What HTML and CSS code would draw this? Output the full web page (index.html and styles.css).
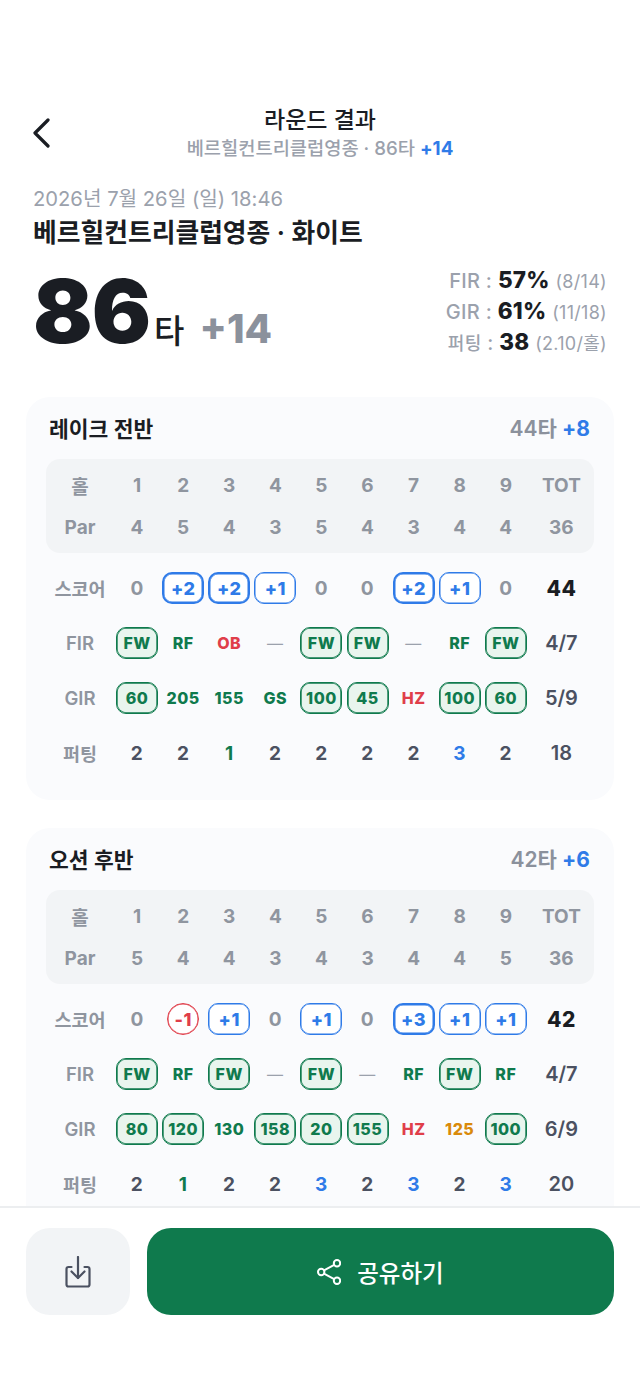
FILE: index.html
```html
<!DOCTYPE html>
<html lang="ko">
<head>
    <meta charset="UTF-8">
    <meta name="viewport" content="width=device-width, initial-scale=1.0">
    <title>라운드 결과</title>
    <link rel="stylesheet" href="styles.css">
</head>
<body>
    <div class="page">
        <div class="content">
            <div class="topbar">
                <svg class="back" width="18" height="30" viewBox="0 0 18 30" fill="none"><path d="M16 2 L3 15 L16 28" stroke="#1a1d23" stroke-width="3.200" stroke-linecap="round" stroke-linejoin="round"/></svg>
                <div class="topbar-title">라운드 결과</div>
                <div class="topbar-sub">베르힐컨트리클럽영종 · 86타 <b class="blue">+14</b></div>
            </div>

            <div class="summary">
                <div class="date">2026년 7월 26일 (일) 18:46</div>
                <div class="course">베르힐컨트리클럽영종 · 화이트</div>
                <div class="result">
                    <div class="score-total"><span class="big">86</span><span class="ta">타</span><span class="over">+14</span></div>
                    <div class="stats">
                        <div>FIR : <b>57%</b> <small>(8/14)</small></div>
                        <div>GIR : <b>61%</b> <small>(11/18)</small></div>
                        <div><span class="stat-ko">퍼팅</span> : <b>38</b> <small>(2.10/홀)</small></div>
                    </div>
                </div>
            </div>

            <div class="card">
                <div class="card-head"><span class="card-title">레이크 전반</span><span class="card-score">44타 <b class="blue">+8</b></span></div>
                <div class="head-table">
                    <div class="row head"><span class="label">홀</span><span>1</span><span>2</span><span>3</span><span>4</span><span>5</span><span>6</span><span>7</span><span>8</span><span>9</span><span class="tot">TOT</span></div>
                    <div class="row head"><span class="label">Par</span><span>4</span><span>5</span><span>4</span><span>3</span><span>5</span><span>4</span><span>3</span><span>4</span><span>4</span><span class="tot">36</span></div>
                </div>
                <div class="row body">
                    <span class="label">스코어</span><span class="zero">0</span><span class="chip dbl">+2</span><span class="chip dbl">+2</span><span class="chip bog">+1</span><span class="zero">0</span><span class="zero">0</span><span class="chip dbl">+2</span><span class="chip bog">+1</span><span class="zero">0</span><span class="tot strong">44</span>
                </div>
                <div class="row body">
                    <span class="label">FIR</span><span class="chip hit">FW</span><span class="g">RF</span><span class="r">OB</span><span class="dash">—</span><span class="chip hit">FW</span><span class="chip hit">FW</span><span class="dash">—</span><span class="g">RF</span><span class="chip hit">FW</span><span class="tot frac">4/7</span>
                </div>
                <div class="row body">
                    <span class="label">GIR</span><span class="chip hit">60</span><span class="g">205</span><span class="g">155</span><span class="g">GS</span><span class="chip hit">100</span><span class="chip hit">45</span><span class="r">HZ</span><span class="chip hit">100</span><span class="chip hit">60</span><span class="tot frac">5/9</span>
                </div>
                <div class="row body putt">
                    <span class="label">퍼팅</span><span>2</span><span>2</span><span class="pg">1</span><span>2</span><span>2</span><span>2</span><span>2</span><span class="pb">3</span><span>2</span><span class="tot frac">18</span>
                </div>
            </div>

            <div class="card">
                <div class="card-head"><span class="card-title">오션 후반</span><span class="card-score">42타 <b class="blue">+6</b></span></div>
                <div class="head-table">
                    <div class="row head"><span class="label">홀</span><span>1</span><span>2</span><span>3</span><span>4</span><span>5</span><span>6</span><span>7</span><span>8</span><span>9</span><span class="tot">TOT</span></div>
                    <div class="row head"><span class="label">Par</span><span>5</span><span>4</span><span>4</span><span>3</span><span>4</span><span>3</span><span>4</span><span>4</span><span>5</span><span class="tot">36</span></div>
                </div>
                <div class="row body">
                    <span class="label">스코어</span><span class="zero">0</span><span class="chip birdie">-1</span><span class="chip bog">+1</span><span class="zero">0</span><span class="chip bog">+1</span><span class="zero">0</span><span class="chip dbl">+3</span><span class="chip bog">+1</span><span class="chip bog">+1</span><span class="tot strong">42</span>
                </div>
                <div class="row body">
                    <span class="label">FIR</span><span class="chip hit">FW</span><span class="g">RF</span><span class="chip hit">FW</span><span class="dash">—</span><span class="chip hit">FW</span><span class="dash">—</span><span class="g">RF</span><span class="chip hit">FW</span><span class="g">RF</span><span class="tot frac">4/7</span>
                </div>
                <div class="row body">
                    <span class="label">GIR</span><span class="chip hit">80</span><span class="chip hit">120</span><span class="g">130</span><span class="chip hit">158</span><span class="chip hit">20</span><span class="chip hit">155</span><span class="r">HZ</span><span class="o">125</span><span class="chip hit">100</span><span class="tot frac">6/9</span>
                </div>
                <div class="row body putt">
                    <span class="label">퍼팅</span><span>2</span><span class="pg">1</span><span>2</span><span>2</span><span class="pb">3</span><span>2</span><span class="pb">3</span><span>2</span><span class="pb">3</span><span class="tot frac">20</span>
                </div>
            </div>
        </div>

        <div class="footer">
            <button class="btn-save">
                <svg width="26" height="32" viewBox="0 0 26 32" fill="none" stroke="#4b5161" stroke-width="2.200" stroke-linecap="round" stroke-linejoin="round"><path d="M6.500 11 H3.500 Q1.500 11 1.500 13 V28.500 Q1.500 30.500 3.500 30.500 H22.500 Q24.500 30.500 24.500 28.500 V13 Q24.500 11 22.500 11 H19.500"/><path d="M13 1 V22"/><path d="M6.500 15.500 L13 22 L19.500 15.500"/></svg>
            </button>
            <button class="btn-share">
                <svg width="24" height="26" viewBox="0 0 24 26" fill="none" stroke="#fff" stroke-width="2"><circle cx="4.200" cy="13" r="3.200"/><circle cx="20" cy="4.300" r="3.200"/><circle cx="20" cy="21.700" r="3.200"/><path d="M7 11.400 L17.200 5.900 M7 14.600 L17.200 20.100"/></svg>
                <span>공유하기</span>
            </button>
        </div>
    </div>
</body>
</html>
```

FILE: styles.css
```css
* {
    box-sizing: border-box;
}
body {
    margin: 0;
    background: #fff;
    color: #1a1d23;
    font-family: Inter, "Noto Sans CJK KR", sans-serif;
}
.page {
    display: flex;
    flex-direction: column;
    height: 1387px;
    overflow: hidden;
}
.content {
    flex: 1;
    min-height: 0;
    overflow: hidden;
    padding: 105px 26px 0;
}
.blue {
    color: #2f7be8;
    font-weight: 700;
}

/* top bar */
.topbar {
    position: relative;
    text-align: center;
    height: 60px;
}
.back {
    position: absolute;
    left: 6px;
    top: 13px;
}
.topbar-title {
    font-size: 23px;
    font-weight: 500;
    line-height: 30px;
}
.topbar-sub {
    font-size: 18.700px;
    line-height: 28px;
    color: #9ba1ac;
    font-weight: 500;
}

/* summary */
.summary {
    padding: 21px 7px 0;
    height: 232px;
}
.date {
    font-size: 20.200px;
    line-height: 26px;
    color: #9ba1ac;
}
.course {
    font-size: 25.800px;
    font-weight: 600;
    line-height: 34px;
    margin-top: 4px;
}
.result {
    display: flex;
    justify-content: space-between;
    align-items: flex-start;
    margin-top: 11px;
    margin-right: -7px;
    padding-right: 7px;
}
.score-total {
    display: flex;
    align-items: baseline;
    line-height: 100px;
}
.big {
    font-size: 88px;
    font-weight: 900;
    letter-spacing: -1px;
}
.ta {
    font-size: 33px;
    font-weight: 500;
    margin-left: 4px;
}
.over {
    font-size: 40px;
    font-weight: 800;
    color: #8b919c;
    margin-left: 15px;
}
.stats {
    padding-top: 5px;
    text-align: right;
    font-size: 20px;
    font-weight: 500;
    letter-spacing: 0.300px;
    color: #9ba1ac;
}
.stats div {
    height: 31px;
    line-height: 31px;
}
.stats b {
    color: #1a1d23;
    font-size: 22.500px;
    font-weight: 800;
    line-height: 1;
}
.stats small {
    font-size: 18px;
    font-weight: 400;
    line-height: 1;
}
.stat-ko {
    font-size: 18px;
}

/* cards */
.card {
    background: #fafbfd;
    border-radius: 24px;
    padding: 19px 20px 31px;
    height: 403px;
    margin-bottom: 28px;
}
.card-head {
    display: flex;
    justify-content: space-between;
    align-items: center;
    height: 22px;
    padding: 0 4px 0 3px;
    margin-bottom: 21px;
}
.card-title {
    font-size: 21.500px;
    font-weight: 600;
}
.card-score {
    font-size: 21px;
    font-weight: 600;
    color: #8b919c;
}
.head-table {
    background: #f2f4f6;
    border-radius: 14px;
    padding: 5px 0;
    margin-bottom: 19px;
}
.row {
    display: grid;
    grid-template-columns: 68px repeat(9, 46.100px) 1fr;
    align-items: center;
    justify-items: center;
    text-align: center;
}
.head {
    height: 42px;
    font-size: 19px;
    font-weight: 700;
    color: #8f959f;
}
.tot {
    justify-self: center;
}
.body {
    height: 32px;
    margin-bottom: 23px;
    font-size: 16px;
    font-weight: 800;
    letter-spacing: 0.500px;
}
.body:last-child {
    margin-bottom: 0;
}
.body .label {
    color: #8f959f;
    font-size: 18.500px;
    font-weight: 600;
    letter-spacing: 0;
}
.chip {
    display: flex;
    align-items: center;
    justify-content: center;
    width: 42px;
    height: 32px;
    border-radius: 10px;
    font-size: 16px;
}
.zero {
    font-size: 19px;
    font-weight: 700;
    color: #8f959f;
}
.dbl {
    border: 2px solid #2f7be8;
    box-shadow: inset 0 0 0 0.500px #2f7be8;
    color: #2f7be8;
    background: #fff;
    font-size: 18px;
}
.bog {
    border: 1px solid #2f7be8;
    box-shadow: inset 0 0 0 0.500px #2f7be8;
    color: #2f7be8;
    background: #fff;
    font-size: 18px;
}
.birdie {
    width: 32px;
    border: 1px solid #e03e4a;
    border-radius: 50%;
    box-shadow: inset 0 0 0 0.500px #e03e4a;
    color: #e03e4a;
    background: #fff;
    font-size: 18px;
}
.hit {
    border: 1px solid #0f7a4d;
    box-shadow: inset 0 0 0 0.700px #0f7a4d;
    background: #e9f5ee;
    color: #0f7a4d;
}
.g {
    color: #0f7a4d;
}
.r {
    color: #e03e4a;
}
.o {
    color: #d98a0b;
}
.dash {
    color: #9ba1ac;
    font-weight: 400;
    font-size: 16px;
}
.strong {
    font-size: 21px;
    color: #1a1d23;
}
.frac {
    font-size: 20px;
    font-weight: 600;
    letter-spacing: 0;
    color: #4b5161;
}
.putt {
    font-size: 19px;
    font-weight: 700;
    color: #4b5161;
}
.pg {
    color: #0f7a4d;
}
.pb {
    color: #2f7be8;
}

/* footer */
.footer {
    flex: none;
    height: 181px;
    display: flex;
    gap: 17px;
    padding: 20px 26px 0;
    border-top: 2px solid #eceef0;
    background: #fff;
}
.footer button {
    border: none;
    height: 87px;
    display: flex;
    align-items: center;
    justify-content: center;
    font-family: inherit;
}
.btn-save {
    width: 104px;
    border-radius: 24px;
    background: #f2f4f6;
}
.btn-share {
    flex: 1;
    gap: 16px;
    border-radius: 24px;
    background: #0f7a4d;
    color: #fff;
    font-size: 23.500px;
    font-weight: 500;
}
```
